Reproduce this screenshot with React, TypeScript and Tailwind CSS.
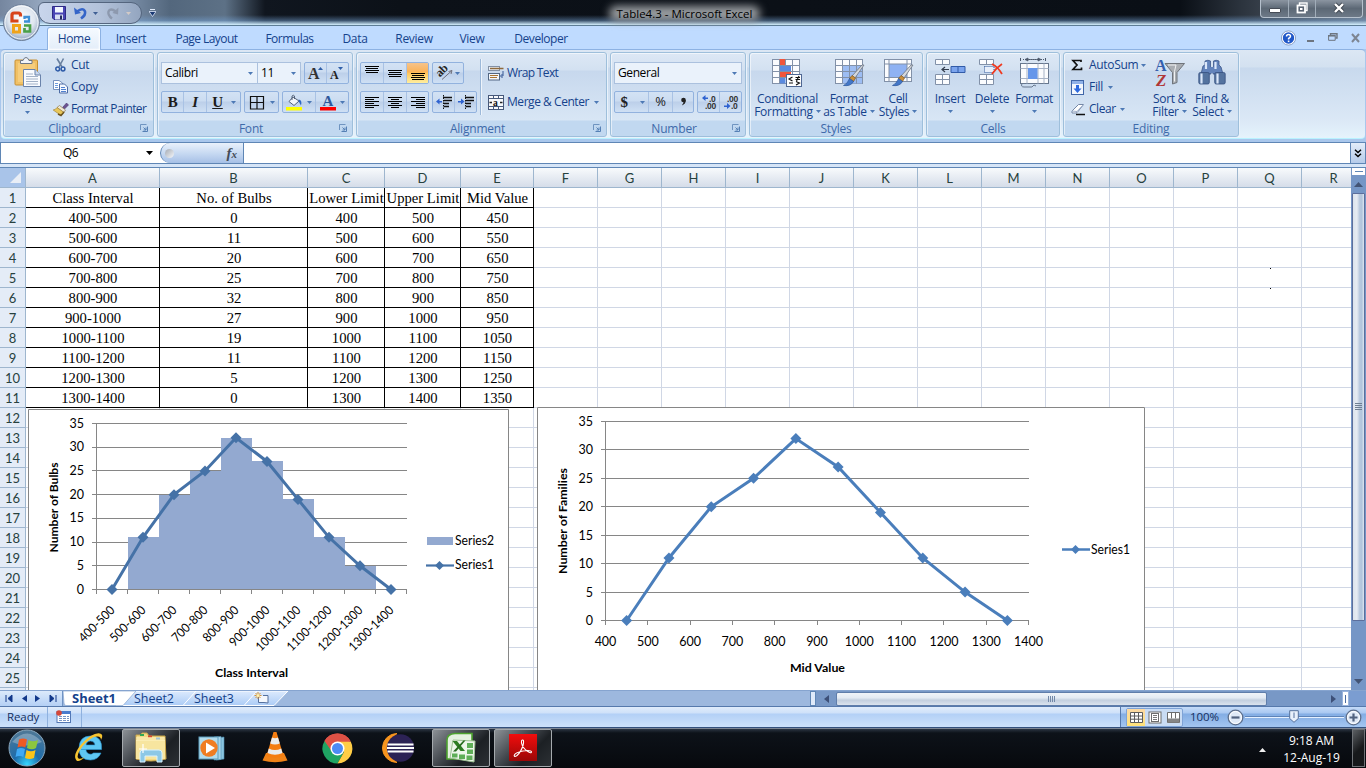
import React from "react";

type P = { children?: React.ReactNode; className?: string };

const Svg = ({ w, h, children, className = "" }: { w: number; h: number; children: React.ReactNode; className?: string }) => (
  <svg width={w} height={h} viewBox={`0 0 ${w} ${h}`} className={`shrink-0 overflow-visible ${className}`}>
    {children}
  </svg>
);

const Arrow = ({ className = "" }: { className?: string }) => (
  <svg width="5" height="3" viewBox="0 0 5 3" className={`shrink-0 ${className}`}>
    <path d="M0 0H5L2.5 3Z" fill="#4d79b5" />
  </svg>
);

/* ---------- Title bar ---------- */

const OfficeButton = () => (
  <svg width="40" height="42" viewBox="0 0 40 42" className="absolute left-[2px] top-[2px] z-20">
    <defs>
      <radialGradient id="orb" cx="50%" cy="40%" r="60%">
        <stop offset="0" stopColor="#ffffff" />
        <stop offset="0.6" stopColor="#dfe6ef" />
        <stop offset="1" stopColor="#8fa3bf" />
      </radialGradient>
    </defs>
    <circle cx="19.500" cy="20.500" r="18" fill="url(#orb)" stroke="#6d7f99" />
    <circle cx="19.500" cy="20.500" r="16.500" fill="none" stroke="#fff" strokeOpacity=".8" />
    <path d="M16.500 19H10V13Q10 11 12 11H16.500Q18.500 11 18.500 13V14.500" fill="none" stroke="#d8441b" strokeWidth="3.200" />
    <path d="M22 19.500H27V15H22.500V17" fill="none" stroke="#3d8fd6" strokeWidth="2.300" />
    <path d="M17.500 30H11.500V23.500H17.500V30Z" fill="none" stroke="#f0a31a" strokeWidth="3" />
    <path d="M22 23.500H28V29.500H22.500V26" fill="none" stroke="#4aa047" strokeWidth="2.700" />
  </svg>
);

const TitleBar = () => (
  <div className="relative flex h-[26px] shrink-0 border-b border-[#5d7d96] bg-[linear-gradient(180deg,rgba(0,0,0,0)_60%,rgba(120,165,215,.45)_82%,#d5f1ff_100%),linear-gradient(90deg,#75869f_0,#93a5bd_40px,#8296b0_120px,#53677d_170px,#5d7186_225px,#10161f_265px,#0c1118_400px,#0a0f16_1180px,#2b333d_1240px,#6b7683_1366px)]">
    <OfficeButton />
    <div className="ml-[38px] mt-[2px] flex h-[22px] w-[104px] items-center rounded-r-[11px] rounded-tl-[6px] rounded-bl-[12px] border border-[#54657e] bg-[linear-gradient(90deg,#c8d5ec,#b3c2da_60%,#93a5bf)] pl-[13px]">
      <Svg w={14} h={14}>
        <path d="M.5 .5H13.500V13.500H2L.5 12Z" fill="#4a45b5" stroke="#2e2a86" />
        <rect x="3" y="1" width="8" height="5.500" fill="#f2f6ff" />
        <rect x="3" y="8.500" width="8" height="5" fill="#d8def2" />
        <rect x="8" y="9.500" width="2" height="4" fill="#222a60" />
      </Svg>
      <Svg w={14} h={14} className="ml-[8px]">
        <path d="M3 5.500Q9 1 11 5.500Q12 9 7 12.500" fill="none" stroke="#3565c8" strokeWidth="2.600" />
        <path d="M0 1.500L1 8.500L7 7Z" fill="#3565c8" />
      </Svg>
      <svg width="5" height="3" className="ml-[5px]"><path d="M0 0H5L2.500 3Z" fill="#3f5f94" /></svg>
      <Svg w={13} h={14} className="ml-[8px]">
        <path d="M10 5.500Q4 1.500 2.500 5.500Q1.500 9 6 12.500" fill="none" stroke="#8d99ae" strokeWidth="2.400" />
        <path d="M12.500 1.500L12 8.500L6.500 7Z" fill="#8d99ae" />
      </Svg>
      <svg width="5" height="3" className="ml-[7px]"><path d="M0 0H5L2.500 3Z" fill="#d3cac6" /></svg>
    </div>
    <svg width="7" height="8" viewBox="0 0 7 8" className="ml-[7px] mt-[9px]">
      <path d="M1 .5H6" stroke="#dfe9fa" />
      <path d="M0 2.500H7L3.500 7.500Z" fill="#1a3973" stroke="#dfe9fa" strokeWidth=".8" />
    </svg>
    <div className="relative ml-[455px] mt-[4px] h-[19px] w-[147px] whitespace-nowrap text-center text-[11.5px] leading-[19px] text-black">
      <div className="absolute -left-[2px] top-[2px] h-[15px] w-[151px] rounded-[7px] bg-[#9b9fa3] blur-[4px]" />
      <span className="relative">Table4.3 - Microsoft Excel</span>
    </div>
    <div className="ml-auto mr-[3px] flex h-[18px] w-[103px] overflow-hidden rounded-b-[4px] border border-t-0 border-[#b6c1cd] bg-[linear-gradient(180deg,#8b95a1,#5c6875_50%,#6d7987)]">
      <div className="flex w-[28px] justify-center border-r border-[#a1adb9] pt-[8px]">
        <div className="h-[5px] w-[12px] rounded-[1px] border border-[#454b55] bg-white" />
      </div>
      <div className="flex w-[27px] justify-center border-r border-[#a1adb9] pt-[2px]">
        <Svg w={12} h={12}>
          <rect x="3.500" y="1" width="7.500" height="7.500" fill="none" stroke="#fff" strokeWidth="1.400" />
          <rect x="1.500" y="3.500" width="7.500" height="7" fill="#5a6573" stroke="#fff" strokeWidth="1.800" />
          <rect x="4" y="6" width="2.500" height="2" fill="#fff" />
        </Svg>
      </div>
      <div className="flex flex-1 justify-center pt-[3px]">
        <Svg w={12} h={10}>
          <path d="M2 1L10 9M10 1L2 9" stroke="#3d444e" strokeWidth="4" />
          <path d="M2 1L10 9M10 1L2 9" stroke="#fff" strokeWidth="2.400" />
        </Svg>
      </div>
    </div>
  </div>
);

/* ---------- Ribbon tabs ---------- */

const Tab = ({ children, className = "" }: P) => <div className={`shrink-0 text-center leading-[24px] ${className}`}>{children}</div>;

const Tabs = () => (
  <div className="flex h-[23px] shrink-0 bg-[#bfdbff] pl-[47px] pt-[1px] text-[12px] tracking-[-0.3px] text-[#15428b]">
    <Tab className="relative z-10 h-[23px] w-[54px] rounded-t-[3px] border border-b-0 border-[#8db2e3] bg-[linear-gradient(180deg,#f5faff,#e3edf9)] shadow-[inset_0_0_2px_1px_#fff]"><span className="relative -top-px">Home</span></Tab>
    <Tab className="w-[60px]">Insert</Tab>
    <Tab className="w-[91px] tracking-[-0.55px]">Page Layout</Tab>
    <Tab className="w-[75px] tracking-[-0.5px]">Formulas</Tab>
    <Tab className="w-[56px]">Data</Tab>
    <Tab className="w-[62px]">Review</Tab>
    <Tab className="w-[54px]">View</Tab>
    <Tab className="w-[84px] tracking-[-0.45px]">Developer</Tab>
    <div className="ml-auto flex items-center pr-[6px]">
      <Svg w={15} h={15}>
        <circle cx="7.500" cy="7" r="6.300" fill="#2057c8" stroke="#fff" strokeWidth="1.200" />
        <circle cx="7.500" cy="7" r="7.100" fill="none" stroke="#7288b0" strokeWidth=".7" />
        <path d="M5.500 5.500Q5.500 3.500 7.500 3.500T9.500 5.300Q9.500 6.500 7.600 7.500V8.500" fill="none" stroke="#fff" strokeWidth="1.500" />
        <rect x="6.800" y="9.500" width="1.600" height="1.600" fill="#fff" />
      </Svg>
      <div className="ml-[11px] mt-[5px] h-[2px] w-[7px] bg-[#6d7580]" />
      <Svg w={10} h={8} className="ml-[14px]">
        <path d="M2.500 1V-.2H9V4H7.500" fill="none" stroke="#6d7580" strokeWidth="1.400" />
        <path d="M.6 1.500H7.200V6.300H.6Z" fill="none" stroke="#6d7580" />
        <path d="M0 1.800H7.500" stroke="#6d7580" strokeWidth="1.500" />
      </Svg>
      <Svg w={9} h={9} className="ml-[13px]">
        <path d="M1 0L8 8M8 0L1 8" stroke="#7d8592" strokeWidth="2" />
      </Svg>
    </div>
  </div>
);

/* ---------- Ribbon groups ---------- */

const Group = ({ title, width, launcher, children }: { title: string; width: string; launcher?: boolean; children: React.ReactNode }) => (
  <div className={`flex h-[85px] shrink-0 flex-col overflow-hidden rounded-[3px] border border-[#9ebfdb] bg-[linear-gradient(180deg,#dde8f5_0,#d3e1f1_17px,#c7d8ed_18px,#d8e6f5_67px,#c1d8f0_68px,#c1d8f0_100%)] shadow-[1px_1px_0_#e9f2fb,inset_1px_1px_0_rgba(255,255,255,.55)] ${width}`}>
    <div className="flex h-[68px] shrink-0">{children}</div>
    <div className="relative h-[15px] text-center text-[12px] leading-[16px] tracking-[-0.2px] text-[#3e6aaa]">
      <span className={launcher ? "pr-[8px]" : ""}>{title}</span>
      {launcher && (
        <svg width="8" height="8" viewBox="0 0 8 8" className="absolute right-[5px] top-[3px]">
          <path d="M.5 6V.5H6.500" fill="none" stroke="#6f94c0" />
          <path d="M2.500 7.500H7.500V2.500M3.500 3.500L6 6M6 3.500V6H3.500" fill="none" stroke="#5580b5" />
        </svg>
      )}
    </div>
  </div>
);

const Box = ({ children, className = "" }: P) => (
  <div className={`flex h-[22px] shrink-0 overflow-hidden rounded-[2px] border border-[#92b2de] bg-[linear-gradient(180deg,#d3e2f4_0,#cbdcf1_9px,#bccfe9_10px,#cfe0f4_100%)] ${className}`}>{children}</div>
);
const Btn = ({ children, className = "" }: P) => (
  <div className={`flex shrink-0 items-center justify-center border-r border-[#a9c2e4] last:border-r-0 ${className}`}>{children}</div>
);
const Field = ({ children, className = "" }: P) => (
  <div className={`flex h-[22px] shrink-0 items-center justify-between border border-[#abc1de] bg-[#eaf2fb] pl-[3px] text-[12px] tracking-[-0.4px] text-black ${className}`}>
    <span>{children}</span>
    <Arrow />
  </div>
);

const PasteIcon = () => (
  <Svg w={27} h={31}>
    <rect x="1" y="3" width="22.500" height="25" rx="1" fill="#f1c166" stroke="#c79034" />
    <rect x="4" y="6" width="17" height="19" fill="#f6cd7c" />
    <path d="M6.500 6.500V3.500H9Q10 .5 12 .5T15 3.500H18V6.500Z" fill="#f1f4f8" stroke="#6e7785" />
    <path d="M9.500 12.500H21L26.500 18V29.500H9.500Z" fill="#f9fbff" stroke="#6a83ab" />
    <path d="M21 12.500V18H26.500" fill="#c9d8ee" stroke="#6a83ab" />
    <path d="M12 17H19M12 19.500H24M12 22H24M12 24.500H24M12 27H24" stroke="#a3b2c8" />
  </Svg>
);
const CutIcon = () => (
  <Svg w={11} h={14}>
    <path d="M2 .5L7 9M8.500 .5L4 9" stroke="#69809f" strokeWidth="1.600" />
    <circle cx="2.700" cy="11" r="1.900" fill="none" stroke="#2f5ca8" strokeWidth="1.500" />
    <circle cx="8" cy="11" r="1.900" fill="none" stroke="#2f5ca8" strokeWidth="1.500" />
  </Svg>
);
const CopyIcon = () => (
  <Svg w={16} h={14}>
    <path d="M.5 .5H6L9.500 3V9.500H.5Z" fill="#fff" stroke="#7591be" />
    <path d="M2 3.500H5M2 5.500H5M2 7.500H5" stroke="#6d9bdd" />
    <path d="M6.500 4H11.500L14.500 7V13H6.500Z" fill="#f4f8ff" stroke="#4c6ba4" />
    <path d="M8 7.500H12M8 9.500H13M8 11.500H13" stroke="#4f80cf" />
  </Svg>
);
const PainterIcon = () => (
  <Svg w={16} h={14}>
    <path d="M9.500 5.500L13.500 1L15.500 3L11.500 7Z" fill="#6a5290" stroke="#47346b" strokeWidth=".6" />
    <path d="M6.500 3.500L12.500 8L11 10.500L4 5.500Z" fill="#efe9d6" stroke="#8c7a56" strokeWidth=".7" />
    <path d="M4 5.500L11 10.500L8 13.500L.2 8Q3 7.500 4 5.500Z" fill="#e8c75a" stroke="#a7883a" strokeWidth=".7" />
    <path d="M5 12L8 13.500L11 10" stroke="#6b5320" fill="none" strokeWidth="1.500" />
  </Svg>
);

const Clipboard = () => (
  <Group title="Clipboard" width="w-[151px]" launcher>
    <div className="flex w-[49px] flex-col items-center pr-[2px] pt-[4px]">
      <PasteIcon />
      <div className="mt-[2px] text-[12px] leading-[17px] tracking-[-0.4px]">Paste</div>
      <Arrow className="mt-[4px]" />
    </div>
    <div className="flex flex-col pt-[1px] leading-[22px]">
      <div className="flex h-[22px] items-center"><span className="flex w-[18px] justify-center pr-[3px]"><CutIcon /></span><span>Cut</span></div>
      <div className="flex h-[22px] items-center"><span className="w-[18px]"><CopyIcon /></span><span>Copy</span></div>
      <div className="flex h-[22px] items-center"><span className="w-[18px]"><PainterIcon /></span><span className="whitespace-nowrap tracking-[-0.6px]">Format Painter</span></div>
    </div>
  </Group>
);

const FontGroup = () => (
  <Group title="Font" width="w-[196px]" launcher>
    <div className="flex flex-col pl-[3px] pt-[9px]">
      <div className="flex">
        <Field className="w-[97px] pr-[4px]">Calibri</Field>
        <Field className="w-[43px] border-l-0 pl-[2px] pr-[4px]">11</Field>
        <Box className="ml-[3px] w-[45px]">
          <Btn className="w-[22px]"><Svg w={17} h={16}><text x="1" y="14" fontFamily="Liberation Serif, serif" fontWeight="bold" fontSize="16" fill="#333" textLength="11">A</text><path d="M11 5H16L13.500 2Z" fill="#2f5fa8" /></Svg></Btn>
          <Btn className="w-[21px]"><Svg w={15} h={16}><text x="0" y="14" fontFamily="Liberation Serif, serif" fontWeight="bold" fontSize="12" fill="#222">A</text><path d="M8 2H13L10.500 5Z" fill="#2f5fa8" /></Svg></Btn>
        </Box>
      </div>
      <div className="mt-[7px] flex text-[#1c1c1c]">
        <Box className="w-[80px] font-[Liberation_Serif,serif] text-[15px] font-bold">
          <Btn className="w-[22px]">B</Btn>
          <Btn className="w-[23px] italic">I</Btn>
          <Btn className="flex-1 gap-[8px] border-r-0 pl-[1px]"><span className="underline decoration-1">U</span><Arrow /></Btn>
        </Box>
        <Box className="ml-[3px] w-[35px]">
          <Btn className="w-[24px] border-r-0"><Svg w={14} h={14}><path d="M.5 1.500H13.500V14H.5ZM7 1V14M1 7.500H13" fill="none" stroke="#111" strokeWidth="1.200" /></Svg></Btn>
          <Btn className="w-[7px]"><Arrow /></Btn>
        </Box>
        <Box className="ml-[3px] w-[67px]">
          <Btn className="w-[33px] gap-[4px]">
            <Svg w={17} h={16}>
              <path d="M7 3L13 7L8 11.500L3 7.500Z" fill="#f2f5fa" stroke="#55637a" />
              <path d="M6 6V2Q7.500 .5 8.500 2V5" fill="none" stroke="#55637a" />
              <path d="M12.500 5.500Q16.500 6 15 11.500Q13.500 9 12.800 7.500Z" fill="#2d68c4" />
              <rect x="0" y="13" width="16" height="3.500" fill="#ff0" />
            </Svg>
            <Arrow />
          </Btn>
          <Btn className="w-[32px] gap-[4px]">
            <Svg w={16} h={16}>
              <text x="2.500" y="11.500" fontFamily="Liberation Serif, serif" fontWeight="bold" fontSize="15" fill="#2e589c">A</text>
              <rect x="0" y="13" width="16" height="3.500" fill="#f00" />
            </Svg>
            <Arrow />
          </Btn>
        </Box>
      </div>
    </div>
  </Group>
);

const Lines = ({ rows, y0, step = 3 }: { rows: [number, number][]; y0: number; step?: number }) => (
  <Svg w={16} h={18}>
    {rows.map(([x, w], i) => (
      <rect key={i} x={x} y={y0 + i * step} width={w} height="1" fill="#000" />
    ))}
  </Svg>
);
const Indent = ({ right }: { right?: boolean }) => (
  <Svg w={18} h={16}>
    <path d="M8 3.500H17M9 6.500H17M9 9.500H14M9 12.500H14" stroke="#111" strokeWidth="1.600" />
    <path d="M8.500 1V15" stroke="#111" strokeDasharray="1.500 1" />
    {right ? <path d="M1 7H4V4.500L7.500 7.500L4 10.500V8.500H1Z" fill="#2e62d0" /> : <path d="M7 7H4.500V4.500L1 7.500L4.500 10.500V8.500H7Z" fill="#2e62d0" />}
  </Svg>
);

const Alignment = () => (
  <Group title="Alignment" width="w-[251px]" launcher>
    <div className="flex flex-col pl-[3px] pt-[9px]">
      <div className="flex gap-[3px]">
        <Box className="w-[69px]">
          <Btn className="w-[23px]"><Lines y0={2} step={2} rows={[[1, 14], [2, 12], [1, 14], [2, 12]]} /></Btn>
          <Btn className="w-[23px]"><Lines y0={6} step={2} rows={[[1, 14], [2, 12], [1, 14], [2, 12]]} /></Btn>
          <Btn className="w-[22px] bg-[linear-gradient(180deg,#f6c38a_0,#fbb256_9px,#ffc65c_10px,#ffee9e_100%)]"><Lines y0={9} step={2} rows={[[1, 14], [2, 12], [1, 14], [2, 12]]} /></Btn>
        </Box>
        <Box className="w-[32px]">
          <Btn className="w-[30px] gap-[2px]">
            <Svg w={17} h={16}>
              <text x="4" y="12.500" fontFamily="Liberation Serif, serif" fontWeight="bold" fontSize="12" fill="#222" transform="rotate(-45 4 12.500)">ab</text>
              <path d="M6 14.500L16 5.500M16 5.500L12.500 6.500M16 5.500L15 9" stroke="#70707c" fill="none" />
            </Svg>
            <Arrow />
          </Btn>
        </Box>
      </div>
      <div className="mt-[7px] flex gap-[3px]">
        <Box className="w-[69px]">
          <Btn className="w-[23px]"><Lines y0={4} step={2} rows={[[1, 14], [1, 9], [1, 14], [1, 9], [1, 14], [1, 9]]} /></Btn>
          <Btn className="w-[23px]"><Lines y0={4} step={2} rows={[[1, 14], [4, 8], [1, 14], [4, 8], [1, 14], [4, 8]]} /></Btn>
          <Btn className="w-[22px]"><Lines y0={4} step={2} rows={[[1, 14], [6, 9], [1, 14], [6, 9], [1, 14], [6, 9]]} /></Btn>
        </Box>
        <Box className="w-[45px]">
          <Btn className="w-[22px]"><Indent /></Btn>
          <Btn className="w-[21px]"><Indent right /></Btn>
        </Box>
      </div>
    </div>
    <div className="ml-[3px] mt-[6px] h-[56px] w-[2px] border-l border-[#9db9d9] bg-[#eef4fb]" />
    <div className="flex flex-col gap-[7px] pl-[6px] pt-[9px]">
      <div className="flex h-[22px] items-center gap-[3px]">
        <Svg w={16} h={16}>
          <rect x=".5" y="1.500" width="11" height="4" fill="#e9eef5" stroke="#8290a5" />
          <path d="M2 3.500H15.500" stroke="#8e6a3c" strokeWidth="1.300" />
          <rect x=".5" y="8.500" width="11" height="6.500" fill="#f4f7fb" stroke="#526783" />
          <path d="M2 10.500H10M2 12.500H9" stroke="#a97534" />
          <path d="M15 6V11H13.500M14.500 9L12.500 11L14.500 13" stroke="#345694" fill="none" />
        </Svg>
        <span className="whitespace-nowrap tracking-[-0.65px]">Wrap Text</span>
      </div>
      <div className="flex h-[22px] items-center gap-[3px]">
        <Svg w={16} h={15}>
          <rect x=".5" y=".5" width="15" height="14" fill="#f7f9fc" stroke="#47597a" />
          <path d="M.5 3.500H15.500M.5 11.500H15.500M5.500 .5V3.500M10.500 .5V3.500M5.500 11.500V14.500M10.500 11.500V14.500" stroke="#47597a" />
          <path d="M1.500 7.500H4M14.500 7.500H12" stroke="#222" strokeWidth="1.400" />
          <text x="5" y="10.500" fontSize="9.500" fontFamily="Liberation Serif, serif" fontWeight="bold" fill="#111">a</text>
        </Svg>
        <span className="whitespace-nowrap tracking-[-0.45px]">Merge &amp; Center</span>
        <Arrow className="ml-[2px]" />
      </div>
    </div>
  </Group>
);

const Decimal = ({ less }: { less?: boolean }) => (
  <Svg w={18} h={16}>
    <text x={less ? 5 : 9} y="7.500" fontFamily="Liberation Sans, sans-serif" fontWeight="bold" fontSize="8.500" fill="#333">{less ? ".00" : ".0"}</text>
    <text x={less ? 9 : 5} y="15" fontFamily="Liberation Sans, sans-serif" fontWeight="bold" fontSize="8.500" fill="#333">{less ? ".0" : ".00"}</text>
    {less ? <path d="M2 11.500H5V9L8.500 12L5 15V13H2Z" fill="#2e62d0" /> : <path d="M8 3.500H5.500V1L2 4L5.500 7V5H8Z" fill="#2e62d0" />}
  </Svg>
);

const NumberGroup = () => (
  <Group title="Number" width="w-[136px]" launcher>
    <div className="flex flex-col pl-[3px] pt-[9px]">
      <Field className="w-[128px] pr-[4px]">General</Field>
      <div className="mt-[7px] flex gap-[3px]">
        <Box className="w-[80px] text-[#222]">
          <Btn className="w-[34px] gap-[12px] pl-[2px] font-[Liberation_Serif,serif] text-[15px] font-bold"><span>$</span><Arrow /></Btn>
          <Btn className="w-[24px] text-[13px]">%</Btn>
          <Btn className="w-[20px]"><Svg w={7} h={10}><circle cx="3.500" cy="3" r="2.300" fill="#222" /><path d="M5.800 3Q6 7 1.800 8.500Q4 6.500 3.500 4Z" fill="#222" /></Svg></Btn>
        </Box>
        <Box className="w-[45px]">
          <Btn className="w-[22px]"><Decimal /></Btn>
          <Btn className="w-[21px]"><Decimal less /></Btn>
        </Box>
      </div>
    </div>
  </Group>
);

const Big = ({ icon, a, b, className = "" }: { icon: React.ReactNode; a: string; b?: string; className?: string }) => (
  <div className={`flex shrink-0 flex-col items-center pt-[5px] ${className}`}>
    <div className="h-[34px]">{icon}</div>
    <div className="whitespace-nowrap leading-[13px]">{a}</div>
    {b ? (
      <div className="flex items-center gap-[3px] whitespace-nowrap leading-[13px]"><span>{b}</span><Arrow /></div>
    ) : (
      <Arrow className="mt-[5px]" />
    )}
  </div>
);

const Brush = () => (
  <g>
    <path d="M30 7L21 20L18 18L28 7Z" fill="#d4d8dd" stroke="#6c7380" strokeWidth=".8" />
    <path d="M21.500 20L18 17.500L15.500 20.500L19.500 23.500Z" fill="#c98f3c" stroke="#85591d" strokeWidth=".7" />
    <path d="M15.500 20.500L19.500 23.500Q17 28.500 9.500 27.500Q13.500 26 15.500 20.500Z" fill="#4377c8" stroke="#2a549b" strokeWidth=".7" />
  </g>
);

const CondIcon = () => (
  <Svg w={31} h={30}>
    <rect x=".5" y="1.500" width="27" height="24" fill="#fbfcfe" stroke="#8291a8" />
    <rect x="7" y="1" width="6.500" height="6" fill="#f0553c" />
    <rect x="7" y="7.500" width="12" height="6" fill="#5a8ae0" />
    <rect x="7" y="13.500" width="12" height="6" fill="#f0553c" />
    <rect x="7" y="19.500" width="6.500" height="6" fill="#5a8ae0" />
    <path d="M.5 7.500H27.500M.5 13.500H27.500M.5 19.500H27.500M7.500 1.500V25.500M13.500 1.500V7M20.500 1.500V25.500" stroke="#8291a8" />
    <rect x="14.500" y="16.500" width="15" height="12" fill="#fff" stroke="#4f6793" />
    <path d="M20.500 19L17 21L20.500 23M17 25H21M23.500 19.500H28M23.500 21.500H28M27 18L24.500 23M24 23.500L27.500 25L24 27" stroke="#111" fill="none" strokeWidth="1.100" />
  </Svg>
);
const TableIcon = () => (
  <Svg w={31} h={30}>
    <rect x="1.500" y="1.500" width="27" height="24" fill="#fbfcfe" stroke="#8291a8" />
    <rect x="8" y="7" width="20" height="18.500" fill="#9dbdf3" />
    <path d="M1.500 7.500H28.500M1.500 13.500H28.500M1.500 19.500H28.500M8.500 1.500V25.500M15.500 1.500V25.500M22.500 1.500V25.500" stroke="#8291a8" />
    <Brush />
  </Svg>
);
const CellIcon = () => (
  <Svg w={31} h={30}>
    <rect x="1.500" y="1.500" width="27" height="22" fill="#fbfcfe" stroke="#8291a8" />
    <rect x="6" y="6" width="18" height="13" fill="#8fb2f3" />
    <path d="M1.500 6H28.500M1.500 19.500H28.500M6 1.500V23.500M24 1.500V23.500" stroke="#8291a8" />
    <Brush />
  </Svg>
);

const Styles = () => (
  <Group title="Styles" width="w-[174px]">
    <Big className="ml-[4px] w-[67px]" icon={<CondIcon />} a="Conditional" b="Formatting" />
    <Big className="w-[56px]" icon={<TableIcon />} a="Format" b="as Table" />
    <Big className="w-[42px]" icon={<CellIcon />} a="Cell" b="Styles" />
  </Group>
);

const InsertIcon = () => (
  <Svg w={31} h={30}>
    <path d="M.5 1.500H14.500V6.500H.5ZM7.500 1.500V6.500M.5 16.500H14.500V26.500H.5ZM.5 21.500H14.500M7.500 16.500V26.500" fill="#fbfcfe" stroke="#8291a8" />
    <path d="M14 11.500H7M10 9L7 11.500L10 14" fill="none" stroke="#333c4d" strokeWidth="1.200" />
    <path d="M16 8.500H30V14.500H16ZM23 8.500V14.500" fill="#7ba4ed" stroke="#315ba8" />
  </Svg>
);
const DeleteIcon = () => (
  <Svg w={26} h={30}>
    <path d="M.5 1.500H14.500V6.500H.5ZM7.500 1.500V6.500M.5 16.500H14.500V26.500H.5ZM.5 21.500H14.500M7.500 16.500V26.500" fill="#fbfcfe" stroke="#8291a8" />
    <path d="M5.500 8.500H15V14.500H5.500Z" fill="#e8effa" stroke="#31589b" strokeDasharray="1 1" />
    <path d="M13 6Q19 9 23 16M23 6Q17 10 13 16" fill="none" stroke="#ef3a20" strokeWidth="1.800" />
  </Svg>
);
const FormatIcon = () => (
  <Svg w={31} h={31}>
    <path d="M1.500 0V3M26.500 0V3" stroke="#4c586b" />
    <path d="M4 1.500H25" stroke="#4c586b" strokeDasharray="1 1" />
    <path d="M8 1.500H20M6 1.500L9 0V3ZM22 1.500L19 0V3Z" stroke="#4c586b" fill="#4c586b" strokeWidth=".8" />
    <rect x="1.500" y="5.500" width="28" height="20" fill="#fbfcfe" stroke="#68788f" />
    <path d="M1.500 10.500H29.500M1.500 20.500H29.500M8 5.500V25.500M19 5.500V25.500M25 5.500V25.500" stroke="#a7b3c6" />
    <rect x="9" y="10" width="9.500" height="11" fill="#6596ea" />
    <path d="M3 25.500Q1.500 29 5 29H13L15 27L17 28" fill="none" stroke="#68788f" />
  </Svg>
);

const Cells = () => (
  <Group title="Cells" width="w-[134px]">
    <Big className="ml-[2px] w-[42px]" icon={<InsertIcon />} a="Insert" />
    <Big className="w-[42px]" icon={<DeleteIcon />} a="Delete" />
    <Big className="w-[42px] tracking-[-0.5px]" icon={<FormatIcon />} a="Format" />
  </Group>
);

const SortIcon = () => (
  <Svg w={30} h={30}>
    <text x="0" y="13" fontFamily="Liberation Serif, serif" fontWeight="bold" fontSize="16" fill="#3560ad">A</text>
    <text x="1" y="28" fontFamily="Liberation Serif, serif" fontWeight="bold" fontStyle="italic" fontSize="17" fill="#b03636">Z</text>
    <path d="M10 5.500H29.500L22 14.500V24.500L17.500 26V14.500Z" fill="#a9adb2" stroke="#6f747b" />
    <path d="M13 7H21L19.500 13.500V23.500" stroke="#f1f2f3" fill="none" />
  </Svg>
);
const FindIcon = () => (
  <Svg w={28} h={28}>
    <path d="M7 7V3Q10 1.500 12.500 3V8L13 16H3L5 8ZM15.500 8V3Q18 1.500 21 3V7L23 9L25 16H15Z" fill="#6283bb" stroke="#3c5789" strokeWidth=".8" />
    <rect x="12" y="9" width="4" height="6" fill="#6283bb" />
    <rect x=".8" y="14.500" width="10.500" height="11.500" rx="1.500" fill="#54739f" stroke="#354f7f" strokeWidth=".8" />
    <rect x="16.700" y="14.500" width="10.500" height="11.500" rx="1.500" fill="#54739f" stroke="#354f7f" strokeWidth=".8" />
    <path d="M3.500 15.500V25.500M19.500 15.500V25.500M8 4V11M17.500 4V11" stroke="#dbe7fa" strokeWidth="2.200" />
  </Svg>
);

const Editing = () => (
  <Group title="Editing" width="w-[176px]">
    <div className="flex w-[84px] flex-col pl-[7px] pt-[1px]">
      <div className="flex h-[22px] items-center">
        <Svg w={18} h={12}><path d="M10 3V1.500H2L6 6L2 10.500H10.500V8.500" fill="none" stroke="#111" strokeWidth="1.700" /></Svg>
        <span>AutoSum</span><Arrow className="ml-[3px]" />
      </div>
      <div className="flex h-[22px] items-center">
        <Svg w={18} h={15}>
          <rect x=".5" y=".5" width="12" height="14" fill="#f3f7fd" stroke="#4066a8" />
          <rect x="1" y="1" width="11" height="3" fill="#91b2e8" />
          <path d="M5 5H8V8.500H10.500L6.500 13L2.500 8.500H5Z" fill="#2e6adf" />
        </Svg>
        <span>Fill</span><Arrow className="ml-[5px]" />
      </div>
      <div className="flex h-[22px] items-center">
        <Svg w={18} h={13}>
          <path d="M1 8L7.500 1.500H12.500L7 8.500Q6 10 5 10H1Z" fill="#fff" stroke="#7487a6" />
          <path d="M1 8L6 8.500L12.500 1.500" fill="none" stroke="#9fb0cb" />
          <path d="M5 11.500H14" stroke="#111" strokeWidth="1.300" />
        </Svg>
        <span className="tracking-[-0.45px]">Clear</span><Arrow className="ml-[4px]" />
      </div>
    </div>
    <Big className="w-[43px]" icon={<SortIcon />} a="Sort &" b="Filter" />
    <Big className="w-[42px]" icon={<FindIcon />} a="Find &" b="Select" />
  </Group>
);

const Ribbon = () => (
  <div className="flex h-[93px] shrink-0 bg-[#a9c7ec] pb-[3px] pl-px pr-px">
    <div className="flex w-full gap-[3px] rounded-[4px] border-y border-t-[#8db2e3] border-b-[#b9f2ff] bg-[linear-gradient(180deg,#dce7f4_0,#d3e1f0_17px,#c8d9ed_18px,#dbe8f6_70px,#e5f3fc_100%)] pl-[2px] pt-[2px] text-[12px] tracking-[-0.3px] text-[#15428b]">
      <Clipboard />
      <FontGroup />
      <Alignment />
      <NumberGroup />
      <Styles />
      <Cells />
      <Editing />
    </div>
  </div>
);

/* ---------- Formula bar ---------- */

const FormulaBar = () => (
  <div className="flex h-[25px] shrink-0 flex-col bg-[#d6e5f7]">
    <div className="flex h-[22px] border-y border-[#5f86b5] bg-white">
      <div className="flex w-[160px] items-center border-l border-[#5f86b5]">
        <span className="w-[139px] text-center text-[12px] tracking-[-0.5px] text-black">Q6</span>
        <svg width="7" height="4" className="ml-[6px]"><path d="M0 0H7L3.500 4Z" fill="#000" /></svg>
      </div>
      <div className="flex w-[84px] items-center justify-between rounded-l-[11px] border-l border-r border-[#5f86b5] bg-[linear-gradient(180deg,#e9f1fb_0,#c8daf2_50%,#a6c0e6_100%)] pl-[4px] pr-[6px]">
        <span className="h-[9px] w-[9px] rounded-full bg-[linear-gradient(135deg,#a4aab3,#f6f8fb)]" />
        <span className="font-[Liberation_Serif,serif] text-[15px] font-bold italic leading-[16px] text-[#444b57]">f<span className="text-[11px]">x</span></span>
      </div>
      <div className="flex-1" />
      <div className="flex w-[16px] items-center justify-center border-l border-r border-[#5f86b5] bg-[linear-gradient(180deg,#e3edf9,#b5cbea)]">
        <Svg w={8} h={9}><path d="M1 .8L4 3.500L7 .8M1 4.800L4 7.500L7 4.800" fill="none" stroke="#000" strokeWidth="1.500" /></Svg>
      </div>
    </div>
  </div>
);

/* ---------- Worksheet ---------- */

const COLS: [string, string][] = [
  ["A", "w-[134px]"], ["B", "w-[148px]"], ["C", "w-[77px]"], ["D", "w-[76px]"], ["E", "w-[73px]"], ["F", "w-[64px]"],
  ["G", "w-[64px]"], ["H", "w-[64px]"], ["I", "w-[64px]"], ["J", "w-[64px]"], ["K", "w-[64px]"], ["L", "w-[64px]"],
  ["M", "w-[64px]"], ["N", "w-[64px]"], ["O", "w-[64px]"], ["P", "w-[64px]"], ["Q", "w-[64px]"], ["R", "w-[64px]"],
];

const DATA: string[][] = [
  ["Class Interval", "No. of Bulbs", "Lower Limit", "Upper Limit", "Mid Value"],
  ["400-500", "0", "400", "500", "450"],
  ["500-600", "11", "500", "600", "550"],
  ["600-700", "20", "600", "700", "650"],
  ["700-800", "25", "700", "800", "750"],
  ["800-900", "32", "800", "900", "850"],
  ["900-1000", "27", "900", "1000", "950"],
  ["1000-1100", "19", "1000", "1100", "1050"],
  ["1100-1200", "11", "1100", "1200", "1150"],
  ["1200-1300", "5", "1200", "1300", "1250"],
  ["1300-1400", "0", "1300", "1400", "1350"],
];

const VALUES = [0, 11, 20, 25, 32, 27, 19, 11, 5, 0];
const TICKS = [0, 5, 10, 15, 20, 25, 30, 35];
const FONT = "Lato, sans-serif";

const Diamond = ({ x, y, r = 5.5, fill }: { x: number; y: number; r?: number; fill: string }) => (
  <path d={`M${x} ${y - r}L${x + r} ${y}L${x} ${y + r}L${x - r} ${y}Z`} fill={fill} />
);

const HistogramChart = () => {
  const px = (i: number) => 68.5 + 31 * i;
  const py = (v: number) => 180.5 - (v * 166) / 35;
  const pts = VALUES.map((v, i) => [px(i) + 15.5, py(v)] as [number, number]);
  return (
    <svg width="481" height="282" className="absolute left-[28px] top-[242px] bg-white" fontFamily={FONT} fontSize="12.500">
      <path d="M.5 282V.5H480.500V282" fill="none" stroke="#868686" />
      {TICKS.map((t) => (
        <g key={t}>
          <path d={`M64 ${Math.round(py(t) - 0.5) + 0.5}H379`} stroke="#868686" />
          <text x="56" y={py(t) + 4} textAnchor="end">{t}</text>
        </g>
      ))}
      {VALUES.map((v, i) => v > 0 && <rect key={i} x={px(i) + 0.5} y={py(v)} width="31" height={180.5 - py(v)} fill="#93a9d0" shapeRendering="crispEdges" />)}
      <path d="M68.500 15V181M64 180.500H379" stroke="#868686" />
      {Array.from({ length: 11 }, (_, i) => <path key={i} d={`M${px(i)} 181V185`} stroke="#868686" />)}
      <polyline points={pts.map((p) => p.join(",")).join(" ")} fill="none" stroke="#4572a7" strokeWidth="3" />
      {pts.map(([x, y], i) => <Diamond key={i} x={x} y={y} fill="#4572a7" />)}
      {DATA.slice(1).map((r, i) => (
        <text key={i} x={px(i) + 19} y="202" textAnchor="end" transform={`rotate(-45 ${px(i) + 19} 202)`} textLength={r[0].length * 6.4} lengthAdjust="spacingAndGlyphs">{r[0]}</text>
      ))}
      <text x="223.500" y="268" textAnchor="middle" fontWeight="bold" fontSize="12" textLength="73" lengthAdjust="spacingAndGlyphs">Class Interval</text>
      <text x="30" y="98.500" textAnchor="middle" fontWeight="bold" fontSize="12" textLength="90" lengthAdjust="spacingAndGlyphs" transform="rotate(-90 30 98.500)">Number of Bulbs</text>
      <rect x="399" y="128" width="26" height="8" fill="#93a9d0" />
      <text x="427" y="136" textLength="39" lengthAdjust="spacingAndGlyphs">Series2</text>
      <path d="M398 156.500H426" stroke="#4572a7" strokeWidth="2.200" />
      <Diamond x={411.5} y={156.5} r={4.5} fill="#4572a7" />
      <text x="427" y="160" textLength="39" lengthAdjust="spacingAndGlyphs">Series1</text>
    </svg>
  );
};

const PolygonChart = () => {
  const px = (m: number) => 68.5 + ((m - 400) * 423) / 1000;
  const py = (v: number) => 213.5 - (v * 199) / 35;
  const pts = VALUES.map((v, i) => [px(450 + i * 100), py(v)] as [number, number]);
  return (
    <svg width="608" height="284" className="absolute left-[537px] top-[240px] bg-white" fontFamily={FONT} fontSize="12.500">
      <path d="M.5 284V.5H607.500V284" fill="none" stroke="#868686" />
      {TICKS.map((t) => (
        <g key={t}>
          <path d={`M64 ${Math.round(py(t) - 0.5) + 0.5}H492`} stroke="#868686" />
          <text x="56" y={py(t) + 4.5} textAnchor="end">{t}</text>
        </g>
      ))}
      <path d="M68.500 14V214" stroke="#868686" />
      {Array.from({ length: 11 }, (_, i) => (
        <g key={i}>
          <path d={`M${Math.round(px(400 + i * 100) - 0.5) + 0.5} 214V218`} stroke="#868686" />
          <text x={px(400 + i * 100)} y="239" textAnchor="middle">{400 + i * 100}</text>
        </g>
      ))}
      <polyline points={pts.map((p) => p.join(",")).join(" ")} fill="none" stroke="#4a7ebb" strokeWidth="3" />
      {pts.map(([x, y], i) => <Diamond key={i} x={x} y={y} fill="#4a7ebb" />)}
      <text x="280.500" y="265" textAnchor="middle" fontWeight="bold" fontSize="12" textLength="55" lengthAdjust="spacingAndGlyphs">Mid Value</text>
      <text x="30" y="114" textAnchor="middle" fontWeight="bold" fontSize="12" textLength="106" lengthAdjust="spacingAndGlyphs" transform="rotate(-90 30 114)">Number of Families</text>
      <path d="M525 142.500H553" stroke="#4a7ebb" strokeWidth="2.500" />
      <Diamond x={538.5} y={142.5} r={4.5} fill="#4a7ebb" />
      <text x="554" y="147" textLength="39" lengthAdjust="spacingAndGlyphs">Series1</text>
    </svg>
  );
};

const Sheet = () => (
  <div className="relative flex h-[523px] w-[1351px] shrink-0 flex-col overflow-hidden bg-white">
    <div className="flex h-[21px] shrink-0 border-y border-t-[#5f86b5] border-b-[#9eb6ce] bg-[linear-gradient(180deg,#f8fafc,#d5dde9)] font-[Lato,sans-serif] text-[13px] text-[#27413e]">
      <div className="flex w-[26px] shrink-0 items-end justify-end border-r border-[#9eb6ce] bg-[#a9c4e9] pb-[3px] pr-[3px]">
        <Svg w={12} h={12}><path d="M11 0V11H0Z" fill="#e9eef6" /></Svg>
      </div>
      {COLS.map(([c, w]) => <div key={c} className={`shrink-0 border-r border-[#9eb6ce] text-center leading-[20px] ${w}`}>{c}</div>)}
    </div>
    {Array.from({ length: 26 }, (_, r) => (
      <div key={r} className="flex h-[20px] shrink-0">
        <div className="w-[26px] shrink-0 border-b border-r border-[#9eb6ce] bg-[#e4ecf7] text-center font-[Lato,sans-serif] text-[13px] leading-[20px] text-[#27413e]">{r < 25 ? r + 1 : ""}</div>
        {COLS.map(([c, w], i) => {
          const filled = r < 11 && i < 5;
          const dot = c === "Q" && (r === 4 || r === 5);
          return (
            <div key={c} className={`flex shrink-0 justify-center whitespace-nowrap border-b border-r pl-px font-[Liberation_Serif,serif] text-[14.67px] leading-[20px] text-black ${filled ? "border-black" : "border-[#d0d7e5]"} ${w}`}>
              {filled ? DATA[r][i] : dot ? <span className="h-px w-px bg-black" /> : null}
            </div>
          );
        })}
      </div>
    ))}
    <HistogramChart />
    <PolygonChart />
  </div>
);

const VScroll = () => (
  <div className="flex w-[15px] flex-col border-t border-[#5f86b5] bg-[#7596c6]">
    <div className="mx-px flex h-[7px] items-center justify-center bg-white"><div className="h-[2px] w-[8px] border-t border-[#5f86b5]" /></div>
    <div className="flex h-[18px] items-center justify-center"><Svg w={9} h={5}><path d="M0 5H9L4.500 0Z" fill="#435475" /></Svg></div>
    <div className="mx-px flex h-[428px] flex-col items-center justify-center gap-px rounded-[1px] border border-[#5d6f9c] bg-[linear-gradient(90deg,#dbe3ec,#e6ebf2_35%,#b9c9de_60%,#b2c5dc_80%,#dfe7f1)] pb-[2px]">
      <div className="h-px w-[7px] bg-[#6f7f92]" /><div className="h-px w-[7px] bg-[#6f7f92]" /><div className="h-px w-[7px] bg-[#6f7f92]" /><div className="h-px w-[7px] bg-[#6f7f92]" />
    </div>
    <div className="flex-1" />
    <div className="flex h-[17px] items-center justify-center"><Svg w={9} h={5}><path d="M0 0H9L4.500 5Z" fill="#435475" /></Svg></div>
  </div>
);

/* ---------- Sheet tabs ---------- */

const TabStrip = () => (
  <div className="flex h-[17px] shrink-0 border-b border-t border-b-[#5679ac] border-t-[#86a4cf] bg-[#9db8de]">
    <div className="flex w-[63px] items-center justify-between border-r border-[#6f93c4] bg-[linear-gradient(180deg,#dceafb,#b4d0f5)] pl-[5px] pr-[5px]">
      <Svg w={8} h={7}><path d="M1 0V7M7 0L3 3.500L7 7Z" fill="#12388a" stroke="#12388a" strokeWidth="1" /></Svg>
      <Svg w={5} h={7}><path d="M5 0L0 3.500L5 7Z" fill="#12388a" /></Svg>
      <Svg w={5} h={7}><path d="M0 0L5 3.500L0 7Z" fill="#12388a" /></Svg>
      <Svg w={8} h={7}><path d="M7 0V7M1 0L5 3.500L1 7Z" fill="#12388a" stroke="#12388a" strokeWidth="1" /></Svg>
    </div>
    <svg width="226" height="15" viewBox="0 0 226 15" className="shrink-0" fontFamily="Open Sans, sans-serif" fontSize="12">
      <defs>
        <linearGradient id="tabg" x1="0" y1="0" x2="0" y2="1"><stop offset="0" stopColor="#dceafd" /><stop offset="1" stopColor="#acccf6" /></linearGradient>
      </defs>
      <path d="M175 14.500L186 2Q188 0 191 0H225L211 14.500Z" fill="url(#tabg)" stroke="#fff" />
      <path d="M115 14.500L127 2Q129 0 132 0H194L181 14.500Z" fill="url(#tabg)" stroke="#fff" />
      <path d="M53 14.500L66 2Q68 0 71 0H133L120 14.500Z" fill="url(#tabg)" stroke="#fff" />
      <path d="M0 0H73L60 14.500H3Q1 14.500 1 12Z" fill="#fff" stroke="#88a6d1" strokeWidth=".7" />
      <text x="9" y="12" fontWeight="bold" fill="#15428b" textLength="44" lengthAdjust="spacingAndGlyphs">Sheet1</text>
      <text x="71" y="12" fill="#15428b" textLength="40" lengthAdjust="spacingAndGlyphs">Sheet2</text>
      <text x="131" y="12" fill="#15428b" textLength="40" lengthAdjust="spacingAndGlyphs">Sheet3</text>
      <path d="M195.500 5.500V11.500H201L205 12V4.500H200" fill="#f3f7fd" stroke="#55719f" />
      <path d="M195 1V8M191.500 4.500H198.500M192.500 2L197.500 7M197.500 2L192.500 7" stroke="#d98a1e" strokeWidth=".9" />
      <circle cx="195" cy="4.500" r="1.500" fill="#fff3b0" />
    </svg>
    <div className="flex-1" />
    <div className="h-[15px] w-[6px] border border-[#5f86b5] bg-[#dfeafa]" />
    <div className="flex w-[526px] items-center bg-[#7898c6]">
      <div className="flex w-[20px] justify-center"><Svg w={5} h={8}><path d="M5 0L0 4L5 8Z" fill="#3d5078" /></Svg></div>
      <div className="flex h-[14px] w-[431px] items-center justify-center gap-px rounded-[2px] border border-[#5f7daa] bg-[linear-gradient(180deg,#f0f4f9,#e3eaf3_40%,#c3cfdf_60%,#dae3ee)]">
        <i className="h-[6px] w-px bg-[#7288a8]" /><i className="h-[6px] w-px bg-[#7288a8]" /><i className="h-[6px] w-px bg-[#7288a8]" /><i className="h-[6px] w-px bg-[#7288a8]" />
      </div>
      <div className="flex flex-1 justify-end pr-[6px]"><Svg w={5} h={8}><path d="M0 0L5 4L0 8Z" fill="#3d5078" /></Svg></div>
    </div>
    <div className="flex h-[15px] w-[7px] items-center justify-center border border-[#9ab4dc] bg-white"><div className="h-[8px] w-px bg-[#4c6da0]" /></div>
    <div className="w-[17px] bg-[#7b9dd1]" />
  </div>
);

/* ---------- Status bar ---------- */

const Zoomer = ({ plus }: { plus?: boolean }) => (
  <Svg w={17} h={17}>
    <circle cx="8.500" cy="8.500" r="7.300" fill="#dfe9f7" stroke="#5d6f8c" strokeWidth="1.300" />
    <circle cx="8.500" cy="8.500" r="6" fill="none" stroke="#fff" />
    <path d={plus ? "M4.500 8.500H12.500M8.500 4.500V12.500" : "M4.500 8.500H12.500"} stroke="#51627f" strokeWidth="2.200" />
  </Svg>
);

const StatusBar = () => (
  <div className="flex h-[21px] shrink-0 border-b border-[#33507c] bg-[linear-gradient(180deg,#e0ecfb_0,#cfe1f9_6px,#b3d0f6_7px,#cbe0fa_19px)] text-[11.5px] tracking-[-0.1px] text-[#15305f]">
    <div className="w-[48px] border-r border-[#8fb1de] pl-[7px] leading-[20px]">Ready</div>
    <div className="flex w-[34px] items-center justify-center border-r border-[#8fb1de] pb-px pr-[2px]">
      <Svg w={15} h={13}>
        <rect x="1" y="1.500" width="13.500" height="11" fill="#fff" stroke="#5377b3" />
        <rect x="1" y="1" width="13.500" height="3" fill="#4a7ccd" />
        <path d="M3 6.500H13M3 8.500H13M3 10.500H13" stroke="#7895c5" strokeDasharray="3 1" />
        <circle cx="3" cy="3" r="2.800" fill="#d4473a" />
      </Svg>
    </div>
    <div className="flex-1 border-r border-[#5679ac]" />
    <div className="flex w-[245px] items-center bg-[linear-gradient(180deg,#c5dbf8_0,#a9c8f1_6px,#83ade4_7px,#a1c4ef_19px)] pl-[5px]">
      <div className="flex h-[19px] w-[57px] rounded-[2px] border border-[#7fa3d6] bg-[#c9dcf4]">
        <div className="flex w-[18px] items-center justify-center bg-[linear-gradient(180deg,#fbd9a5,#ffe27a)]"><Svg w={13} h={11}><path d="M.5 .5H12.500V10.500H.5ZM.5 4H12.500M.5 7.200H12.500M4.500 .5V10.500M8.500 .5V10.500" fill="#fff" stroke="#5c5c5c" /></Svg></div>
        <div className="flex w-[19px] items-center justify-center"><Svg w={12} h={11}><rect x="0" y="0" width="12" height="11" fill="#fff" stroke="#6d6d6d" /><rect x="2.500" y="1.500" width="7" height="8" fill="#fff" stroke="#6d6d6d" /><path d="M4 3.500H8M4 5.500H8M4 7.500H8" stroke="#777" /></Svg></div>
        <div className="flex w-[18px] items-center justify-center"><Svg w={13} h={11}><path d="M.5 .5H12.500V10.500H.5Z" fill="#fff" stroke="#6d6d6d" /><path d="M4.500 1V6.500M8.500 1V6.500" stroke="#6d6d6d" /><rect x="1" y="6.500" width="11" height="4" fill="#858585" /></Svg></div>
      </div>
      <span className="ml-[7px] w-[37px]">100%</span>
      <Zoomer />
      <div className="relative mx-px flex h-[16px] w-[99px] items-center">
        <div className="h-[2px] w-full border-b border-[#e6f1ff] bg-[#5d83b8]" />
        <svg width="10" height="13" viewBox="0 0 10 13" className="absolute left-[44px] top-px"><path d="M.7 .7H9.300V8.500L5 12.300L.7 8.500Z" fill="#e8f0fb" stroke="#54709c" /><path d="M5 2.500V8" stroke="#54709c" /></svg>
      </div>
      <Zoomer plus />
    </div>
  </div>
);

/* ---------- Taskbar ---------- */

const TaskSlot = ({ children, className = "" }: P) => <div className={`flex h-[38px] shrink-0 items-center justify-center ${className}`}>{children}</div>;
const ACTIVE = "rounded-[2px] border border-[#a5aaae] bg-[linear-gradient(135deg,#8c9196_0,#44494f_40%,#1c2024_65%,#2c3034_100%)]";

const Taskbar = () => (
  <div className="flex h-[40px] shrink-0 border-t border-[#7c8593] bg-[linear-gradient(180deg,#2b3442_0,#0d1219_4px,#07090d_100%)]">
    <TaskSlot className="w-[54px]">
      <Svg w={40} h={38}>
        <defs>
          <radialGradient id="start" cx="50%" cy="95%" r="90%"><stop offset="0" stopColor="#35d7ff" /><stop offset=".4" stopColor="#1d6cab" /><stop offset="1" stopColor="#4c7797" /></radialGradient>
        </defs>
        <circle cx="20" cy="19" r="18" fill="url(#start)" stroke="#8aa7bd" />
        <path d="M5 13Q20 -4 35 13Q20 20 5 13Z" fill="#fff" opacity=".28" />
        <path d="M12 10.500Q16 8.500 20 10.500L18.300 18.500Q14.500 16.500 10.500 18.500Z" fill="#ee5a24" />
        <path d="M21.500 11Q26 13.500 31 11L29 19Q25 21.500 20 19Z" fill="#8cc63f" />
        <path d="M10 20Q14 18 18 20L16.300 28Q12.500 26 8.500 28Z" fill="#3fa9f5" />
        <path d="M19.500 21Q24 23.500 28.500 21L27 29Q22.500 31 18 29Z" fill="#fcc419" />
      </Svg>
    </TaskSlot>
    <TaskSlot className="w-[68px] pb-[3px] pl-[2px]">
      <Svg w={32} h={32}>
        <path d="M8 18.500H28.500Q29.500 5 17.500 5Q6.500 5 6 17Q6 29 17.500 29Q25 29 28 22H20.500Q17 25 13.500 21Q13 20 13 18.500ZM13 14Q13.500 10 17.500 10T22 14Z" fill="#5fc8f3" fillRule="evenodd" stroke="#2b9bd8" strokeWidth=".6" />
        <path d="M3.500 29.500Q-1 24 9 12.500Q20 1 27 2.500Q31 3.500 28 9Q28 5 24 5.500Q17 6 9 16Q2.500 25 5.500 27.500Q8 28.500 12 26Q6 31.500 3.500 29.500Z" fill="#f6c431" />
      </Svg>
    </TaskSlot>
    <TaskSlot className={`w-[58px] ${ACTIVE}`}>
      <Svg w={34} h={32}>
        <path d="M2 3H6L8 1H13L15 4H31L32 27Q17 31 2 27Z" fill="#f3d983" stroke="#c9a548" />
        <rect x="6" y="2" width="4" height="2" fill="#32a852" /><rect x="14" y="3.500" width="4" height="2" fill="#d9482f" /><rect x="22" y="5.500" width="4" height="2" fill="#3e8ede" />
        <path d="M2 8H31V27H2Z" fill="#f7e59f" />
        <path d="M2 8H31M2 6H31" stroke="#fff5c8" />
        <path d="M6 30V21Q6 18 9 18H25Q28 18 28 21V30H23V24H11V30Z" fill="#8cc8e6" stroke="#d8f2ff" />
        <path d="M9 12V21M5 17H13" stroke="#fff" strokeWidth="1.200" />
      </Svg>
    </TaskSlot>
    <TaskSlot className="w-[64px]">
      <Svg w={28} h={28}>
        <path d="M18 4L26 3V25L18 26Z" fill="#8ac4de" stroke="#4e8fb1" strokeWidth=".6" />
        <path d="M16 3L23 2.500V25.500L16 26Z" fill="#a8d6ea" stroke="#4e8fb1" strokeWidth=".6" />
        <rect x="1" y="3" width="19" height="22" fill="#b3dced" stroke="#5c9dbd" />
        <circle cx="11" cy="14" r="8.700" fill="#f07d22" />
        <path d="M8 8.500L17 14L8 19.500Z" fill="#fff" />
      </Svg>
    </TaskSlot>
    <TaskSlot className="w-[62px]">
      <Svg w={28} h={32}>
        <path d="M5 21L1.500 28.500Q14 32 26.500 28.500L23 21Z" fill="#f08318" />
        <path d="M12.500 0H15.500L22.500 24Q14 27.500 5.500 24Z" fill="#f47d11" />
        <path d="M11 5.500Q14 7 17 5.500L18.800 11.500Q14 13.500 9.200 11.500ZM7.800 16.500Q14 19.500 20.200 16.500L21.500 21Q14 24.500 6.500 21Z" fill="#e9ecee" />
      </Svg>
    </TaskSlot>
    <TaskSlot className="w-[62px]">
      <Svg w={31} h={31}>
        <path d="M15.500 15.500L2.500 8A15 15 0 0 1 28.500 8Z" fill="#de5145" />
        <path d="M15.500 15.500L2.500 8A15 15 0 0 0 15.500 30.500L22 19Z" fill="#1fa463" />
        <path d="M15.500 8.500H28.700A15 15 0 0 1 15.500 30.500L22 19Z" fill="#ffcd46" />
        <path d="M2.500 8A15 15 0 0 1 28.700 8.500H15.500Q10 9 9.500 18Z" fill="#de5145" />
        <circle cx="15.500" cy="15.500" r="7" fill="#fff" /><circle cx="15.500" cy="15.500" r="5.500" fill="#4c8bf5" />
      </Svg>
    </TaskSlot>
    <TaskSlot className="w-[64px] pr-[3px]">
      <Svg w={32} h={30}>
        <path d="M14 .5A14.500 14.500 0 0 0 14 29.500A18 18 0 0 1 14 .5Z" fill="#f7941e" stroke="#f7941e" />
        <circle cx="17.500" cy="15" r="13.700" fill="#2c2255" />
        <path d="M4.500 11.500H30.500M4 15H31M4.500 18.500H30.500" stroke="#fff" strokeWidth="1.900" />
      </Svg>
    </TaskSlot>
    <TaskSlot className={`w-[58px] ${ACTIVE}`}>
      <Svg w={32} h={32}>
        <path d="M2 8Q2 2 10 1.500H27V27H2Z" fill="#e5f1e1" stroke="#4da32f" strokeWidth="1.600" />
        <path d="M8 8L30 9L29 30L5 26Z" fill="#eef6ea" stroke="#9ec193" />
        <path d="M22 11H28V16H22ZM22 17.500H28V22H22ZM21.500 23.500H27.500V28H21.500ZM14 22.500H20V27H14ZM7 21.500H12.500V25.500H7Z" fill="#5fae57" />
        <path d="M7.500 9H12L20 19H15.500Z" fill="#2e7d22" /><path d="M18.500 8.500L8 19.500H11L20.500 8.500Z" fill="#276b1d" />
      </Svg>
    </TaskSlot>
    <TaskSlot className={`ml-[4px] w-[58px] ${ACTIVE}`}>
      <Svg w={28} h={27}>
        <defs><linearGradient id="pdf" x1="0" y1="0" x2="0" y2="1"><stop offset="0" stopColor="#f20d0d" /><stop offset="1" stopColor="#9a0707" /></linearGradient></defs>
        <rect y="-1" width="28" height="27" fill="url(#pdf)" />
        <path d="M13.200 5Q15.500 4.500 14 10.500Q12 17 8 20.500Q5.300 22.500 5.200 20.500Q6 17.500 14 16Q22 14.800 22.500 16.800Q22.300 19 18.500 16.300Q13.500 13 12.500 8Q12.200 5.300 13.200 5Z" fill="none" stroke="#fff" strokeWidth="1.100" />
      </Svg>
    </TaskSlot>
    <div className="flex-1" />
    <div className="flex items-center pt-[3px]"><svg width="7" height="4"><path d="M0 4H7L3.500 0Z" fill="#f0f0f0" /></svg></div>
    <div className="ml-[16px] flex w-[59px] flex-col whitespace-nowrap pt-[3px] text-center text-[12px] leading-[17px] text-white">
      <span>9:18 AM</span>
      <span>12-Aug-19</span>
    </div>
    <div className="ml-[11px] mr-[1px] h-[38px] w-[13px] border border-[#6e7276] bg-[linear-gradient(135deg,#5b5f63,#17191b_55%)]" />
  </div>
);

export default function App() {
  return (
    <div className="flex h-[768px] w-[1366px] select-none flex-col overflow-hidden bg-[#bfdbff] font-[Open_Sans,sans-serif]">
      <TitleBar />
      <Tabs />
      <Ribbon />
      <FormulaBar />
      <div className="flex h-[523px] shrink-0">
        <Sheet />
        <VScroll />
      </div>
      <TabStrip />
      <StatusBar />
      <Taskbar />
    </div>
  );
}
